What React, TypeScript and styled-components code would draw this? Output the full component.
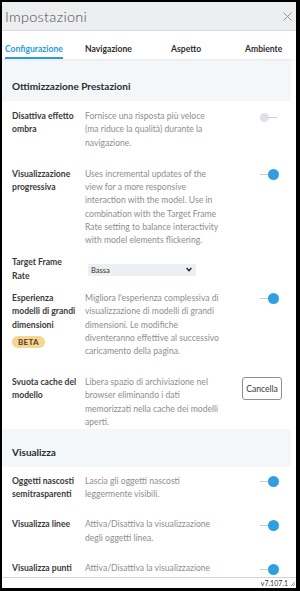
import styled, { createGlobalStyle } from 'styled-components'

const GlobalStyle = createGlobalStyle`
  html, body {
    margin: 0;
    padding: 0;
    background: #000;
  }
  body {
    font-family: Lato, "Noto Sans", sans-serif;
  }
`

const Frame = styled.div`
  width: 294px;
  height: 586px;
  margin: 2px 4px 3px 2px;
  background: #fff;
  display: flex;
  flex-direction: column;
  overflow: hidden;
`

const Header = styled.div`
  height: 28px;
  border-bottom: 1px solid #d9dcdf;
  background: #eceef0;
  display: flex;
  align-items: center;
  justify-content: space-between;
  padding: 0 4px 0 3px;
`

const Title = styled.div`
  font-size: 14.5px;
  font-weight: 300;
  color: #4a4a4a;
  letter-spacing: 0.3px;
`

const Tabs = styled.div`
  height: 28px;
  display: grid;
  grid-template-columns: 80px 86px 74px 1fr;
  padding-left: 3px;
  box-shadow: 0 1px 2px rgba(0, 0, 0, 0.06);
  position: relative;
  z-index: 1;
`

const Tab = styled.div<{ $active?: boolean }>`
  align-self: end;
  justify-self: start;
  font-size: 8.6px;
  font-weight: 700;
  line-height: 12px;
  padding-bottom: 2px;
  color: ${p => (p.$active ? '#2b9bd8' : '#2f2f2f')};
  border-bottom: 2px solid ${p => (p.$active ? '#2b9bd8' : 'transparent')};
`

const Content = styled.div`
  flex: 1;
  overflow: hidden;
  padding-right: 5px;
`

const Section = styled.div<{ $top: number }>`
  background: #f4f7fa;
  padding: ${p => p.$top}px 12px 8px 10px;
  font-size: 10px;
  line-height: 14px;
  font-weight: 700;
  color: #2c2c2c;
`

const Row = styled.div<{ $pt?: number }>`
  display: grid;
  grid-template-columns: 73px 140px 1fr;
  padding: ${p => p.$pt ?? 17.5}px 9px 0 10px;
  font-size: 8.6px;
  line-height: 13.3px;
`

const Label = styled.div`
  font-weight: 700;
  color: #3a3a3a;
  padding-right: 4px;
`

const Desc = styled.div`
  color: #8e8e8e;
  padding-right: 5px;
`

const Control = styled.div`
  display: flex;
  justify-content: flex-end;
  align-items: flex-start;
`

const ToggleBox = styled.div`
  position: relative;
  width: 20px;
  height: 11px;
  margin: 1.5px 3px 0 0;
`

const Track = styled.div<{ $on: boolean }>`
  position: absolute;
  top: 5px;
  height: 1px;
  left: ${p => (p.$on ? '1px' : '9px')};
  width: ${p => (p.$on ? '10px' : '9px')};
  background: #c9ced4;
`

const Knob = styled.div<{ $on: boolean }>`
  position: absolute;
  top: ${p => (p.$on ? '0' : '1px')};
  left: ${p => (p.$on ? '9px' : '1px')};
  width: ${p => (p.$on ? '11px' : '9px')};
  height: ${p => (p.$on ? '11px' : '9px')};
  border-radius: 50%;
  background: ${p => (p.$on ? '#2e9fe0' : '#dce1e7')};
`

const Badge = styled.span`
  display: inline-block;
  margin-top: 4px;
  padding: 0 6px;
  height: 12px;
  line-height: 12px;
  border-radius: 6px;
  background: #f6d58f;
  color: #4a4030;
  font-size: 8px;
  font-weight: 700;
  letter-spacing: 0.3px;
`

const SelectWrap = styled.div`
  position: relative;
  width: 108px;
  height: 12px;
  margin: 7.5px 0 0 3px;
`

const Select = styled.select`
  appearance: none;
  width: 100%;
  height: 12px;
  border: none;
  border-radius: 1px;
  background: #edf0f3;
  font-family: inherit;
  font-size: 7.5px;
  color: #333;
  padding: 0 3px;
  margin: 0;
  outline: none;
`

const Chevron = styled.svg`
  position: absolute;
  right: 4px;
  top: 3px;
  pointer-events: none;
`

const Button = styled.button`
  margin-top: 1.5px;
  height: 23px;
  width: 40px;
  padding: 0;
  border: 1px solid #8f8f8f;
  border-radius: 3px;
  background: #fff;
  font-family: inherit;
  font-size: 8.6px;
  color: #3a3a3a;
`

const Footer = styled.div`
  height: 10px;
  border-top: 1px solid #d4d4d4;
  display: flex;
  justify-content: flex-end;
  align-items: center;
  gap: 2px;
  padding-right: 1px;
  font-size: 7px;
  color: #333;
`

const Toggle = ({ on }: { on: boolean }) => (
  <ToggleBox>
    <Track $on={on} />
    <Knob $on={on} />
  </ToggleBox>
)

const App = () => {
  return (
    <>
      <GlobalStyle />
      <Frame>
        <Header>
          <Title>Impostazioni</Title>
          <svg width="9" height="9" viewBox="0 0 9 9">
            <path d="M0.5 0.5 L8.5 8.5 M8.5 0.5 L0.5 8.5" stroke="#8a8a8a" strokeWidth="0.9" />
          </svg>
        </Header>
        <Tabs>
          <Tab $active>Configurazione</Tab>
          <Tab>Navigazione</Tab>
          <Tab>Aspetto</Tab>
          <Tab>Ambiente</Tab>
        </Tabs>
        <Content>
          <Section $top={20}>Ottimizzazione Prestazioni</Section>
          <Row $pt={9}>
            <Label>Disattiva effetto ombra</Label>
            <Desc>Fornisce una risposta più veloce (ma riduce la qualità) durante la navigazione.</Desc>
            <Control><Toggle on={false} /></Control>
          </Row>
          <Row $pt={17.8}>
            <Label>Visualizzazione progressiva</Label>
            <Desc>
              Uses incremental updates of the view for a more responsive interaction with the model. Use in
              combination with the Target Frame Rate setting to balance interactivity with model elements
              flickering.
            </Desc>
            <Control><Toggle on /></Control>
          </Row>
          <Row $pt={8.8}>
            <Label>Target Frame Rate</Label>
            <Desc>
              <SelectWrap>
                <Select defaultValue="Bassa">
                  <option>Bassa</option>
                  <option>Media</option>
                  <option>Alta</option>
                </Select>
                <Chevron width="6" height="5" viewBox="0 0 6 5">
                  <path d="M0.6 1 L3 3.6 L5.4 1" stroke="#222" strokeWidth="1.4" fill="none" />
                </Chevron>
              </SelectWrap>
            </Desc>
            <Control />
          </Row>
          <Row $pt={9.1}>
            <Label>
              Esperienza modelli di grandi dimensioni
              <br />
              <Badge>BETA</Badge>
            </Label>
            <Desc>
              Migliora l'esperienza complessiva di visualizzazione di modelli di grandi dimensioni. Le modifiche
              diventeranno effettive al successivo caricamento della pagina.
            </Desc>
            <Control><Toggle on /></Control>
          </Row>
          <Row $pt={17.5}>
            <Label>Svuota cache del modello</Label>
            <Desc>Libera spazio di archiviazione nel browser eliminando i dati memorizzati nella cache dei modelli aperti.</Desc>
            <Control><Button>Cancella</Button></Control>
          </Row>
          <Section $top={16}>Visualizza</Section>
          <Row $pt={7.6}>
            <Label>Oggetti nascosti semitrasparenti</Label>
            <Desc>Lascia gli oggetti nascosti leggermente visibili.</Desc>
            <Control><Toggle on /></Control>
          </Row>
          <Row $pt={17.1}>
            <Label>Visualizza linee</Label>
            <Desc>Attiva/Disattiva la visualizzazione degli oggetti linea.</Desc>
            <Control><Toggle on /></Control>
          </Row>
          <Row $pt={17.4}>
            <Label>Visualizza punti</Label>
            <Desc>Attiva/Disattiva la visualizzazione degli oggetti punto.</Desc>
            <Control><Toggle on /></Control>
          </Row>
        </Content>
        <Footer>
          <span>v7.107.1</span>
          <svg width="5" height="5" viewBox="0 0 5 5">
            <path d="M1 5 L5 1 M3 5 L5 3" stroke="#777" strokeWidth="0.7" />
          </svg>
        </Footer>
      </Frame>
    </>
  )
}

export default App
